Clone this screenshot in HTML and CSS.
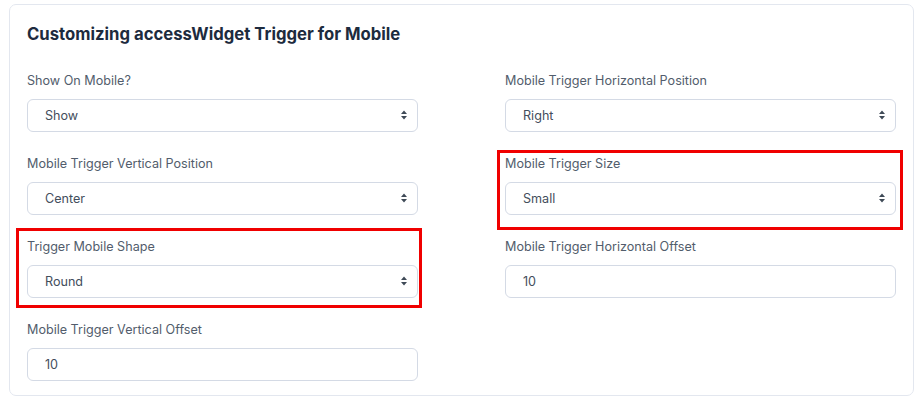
FILE: index.html
```html
<!DOCTYPE html>
<html lang="en">
<head>
  <meta charset="UTF-8">
  <meta name="viewport" content="width=device-width, initial-scale=1">
  <title>Customizing accessWidget Trigger for Mobile</title>
  <link rel="stylesheet" href="styles.css">
</head>
<body>
  <div class="card">
    <h2>Customizing accessWidget Trigger for Mobile</h2>
    <div class="fields">
      <div class="field">
        <label for="showMobile">Show On Mobile?</label>
        <div class="select">
          <select id="showMobile"><option>Show</option><option>Hide</option></select>
          <svg class="arrows" width="8" height="10" viewBox="0 0 8 10"><path d="M4 0.5 7 4H1z M4 9.5 7 6H1z" fill="#3f4a57"/></svg>
        </div>
      </div>
      <div class="field">
        <label for="hPos">Mobile Trigger Horizontal Position</label>
        <div class="select">
          <select id="hPos"><option>Right</option><option>Left</option></select>
          <svg class="arrows" width="8" height="10" viewBox="0 0 8 10"><path d="M4 0.5 7 4H1z M4 9.5 7 6H1z" fill="#3f4a57"/></svg>
        </div>
      </div>
      <div class="field">
        <label for="vPos">Mobile Trigger Vertical Position</label>
        <div class="select">
          <select id="vPos"><option>Center</option><option>Top</option><option>Bottom</option></select>
          <svg class="arrows" width="8" height="10" viewBox="0 0 8 10"><path d="M4 0.5 7 4H1z M4 9.5 7 6H1z" fill="#3f4a57"/></svg>
        </div>
      </div>
      <div class="field marked marked-right">
        <label for="size">Mobile Trigger Size</label>
        <div class="select">
          <select id="size"><option>Small</option><option>Medium</option><option>Large</option></select>
          <svg class="arrows" width="8" height="10" viewBox="0 0 8 10"><path d="M4 0.5 7 4H1z M4 9.5 7 6H1z" fill="#3f4a57"/></svg>
        </div>
      </div>
      <div class="field marked marked-left">
        <label for="shape">Trigger Mobile Shape</label>
        <div class="select">
          <select id="shape"><option>Round</option><option>Square</option></select>
          <svg class="arrows" width="8" height="10" viewBox="0 0 8 10"><path d="M4 0.5 7 4H1z M4 9.5 7 6H1z" fill="#3f4a57"/></svg>
        </div>
      </div>
      <div class="field">
        <label for="hOffset">Mobile Trigger Horizontal Offset</label>
        <input type="text" id="hOffset" value="10">
      </div>
      <div class="field">
        <label for="vOffset">Mobile Trigger Vertical Offset</label>
        <input type="text" id="vOffset" value="10">
      </div>
    </div>
  </div>
</body>
</html>
```

FILE: styles.css
```css
body {
  margin: 4px 5px 0 9px;
  font-family: Inter, "Open Sans", sans-serif;
  background: #fff;
}
.card {
  border: 1px solid #e3e7ef;
  border-radius: 7px;
  padding: 17px 17px 14px;
  background: #fff;
}
h2 {
  margin: 0 0 25px;
  font-size: 16.7px;
  line-height: 24px;
  font-weight: 700;
  color: #1d2b3e;
}
.fields {
  display: grid;
  grid-template-columns: 1fr 1fr;
  column-gap: 87px;
  row-gap: 22px;
}
.field {
  position: relative;
}
label {
  display: block;
  font-size: 12.6px;
  line-height: 20px;
  color: #525d6c;
  margin-bottom: 8px;
}
select, input[type="text"] {
  display: block;
  width: 100%;
  height: 33px;
  box-sizing: border-box;
  padding: 0 17px 1px;
  border: 1px solid #d4dae5;
  border-radius: 6px;
  background: #fff;
  font-family: inherit;
  font-size: 12.6px;
  color: #434e5c;
  appearance: none;
  -webkit-appearance: none;
  outline: none;
}
.select {
  position: relative;
}
.arrows {
  position: absolute;
  right: 10px;
  top: 11px;
  pointer-events: none;
}
/* red annotation boxes */
.marked::after {
  content: "";
  position: absolute;
  border: 3px solid #f00000;
  pointer-events: none;
}
.marked-left::after {
  left: -11px;
  right: -4px;
  top: -9px;
  bottom: -10px;
}
.marked-right::after {
  left: -8px;
  right: -7px;
  top: -4px;
  bottom: -15px;
}
```
